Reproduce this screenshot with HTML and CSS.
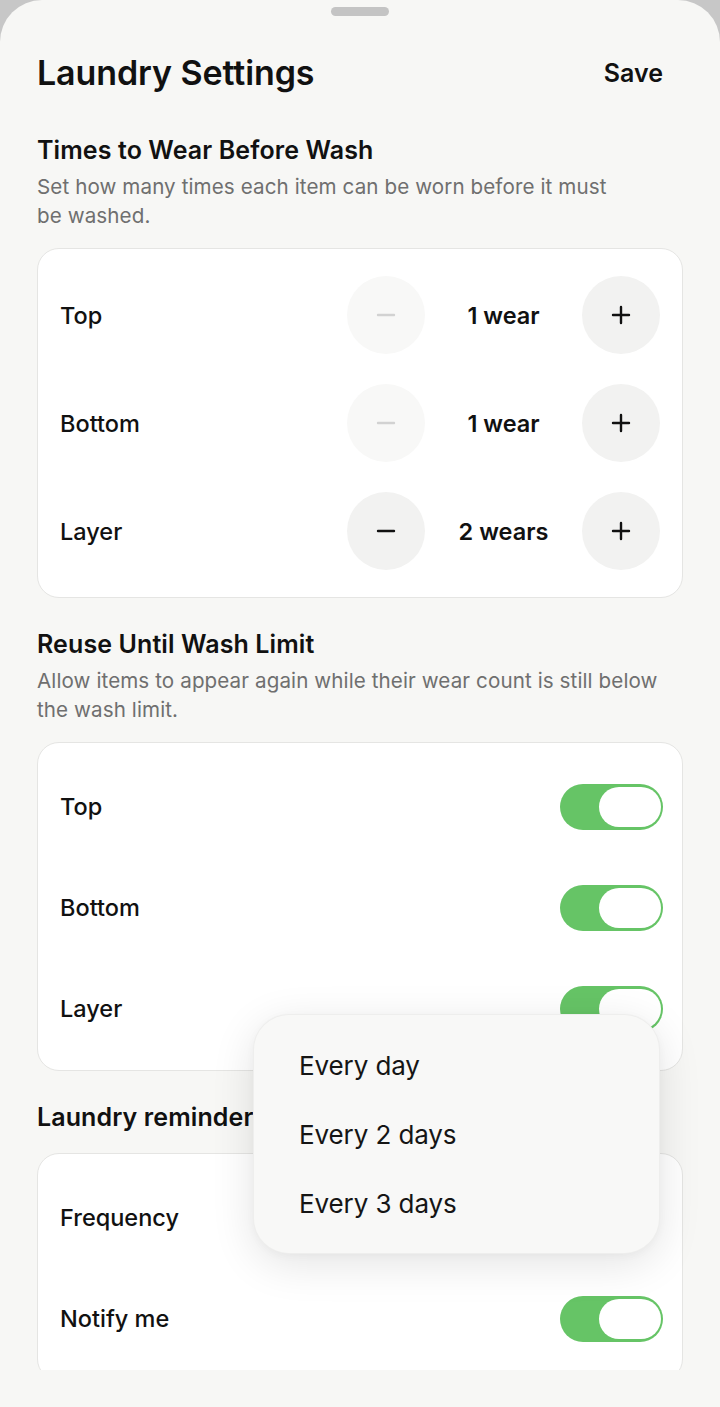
FILE: index.html
```html
<!DOCTYPE html>
<html lang="en">
<head>
<meta charset="utf-8">
<title>Laundry Settings</title>
<link rel="stylesheet" href="styles.css">
</head>
<body>
<div class="sheet">
  <div class="handle"></div>
  <header class="header">
    <h1 class="title">Laundry Settings</h1>
    <button class="save">Save</button>
  </header>
  <div class="scroll">
    <section class="section">
      <h2 class="sec-title">Times to Wear Before Wash</h2>
      <p class="sec-desc">Set how many times each item can be worn before it must<br>be washed.</p>
      <div class="card card-steppers">
        <div class="step-row">
          <span class="label">Top</span>
          <div class="stepper">
            <button class="circle disabled"><svg viewBox="0 0 20 20"><path d="M2 10h16"/></svg></button>
            <span class="value">1 wear</span>
            <button class="circle"><svg viewBox="0 0 20 20"><path d="M2 10h16M10 2v16"/></svg></button>
          </div>
        </div>
        <div class="step-row">
          <span class="label">Bottom</span>
          <div class="stepper">
            <button class="circle disabled"><svg viewBox="0 0 20 20"><path d="M2 10h16"/></svg></button>
            <span class="value">1 wear</span>
            <button class="circle"><svg viewBox="0 0 20 20"><path d="M2 10h16M10 2v16"/></svg></button>
          </div>
        </div>
        <div class="step-row">
          <span class="label">Layer</span>
          <div class="stepper">
            <button class="circle"><svg viewBox="0 0 20 20"><path d="M2 10h16"/></svg></button>
            <span class="value">2 wears</span>
            <button class="circle"><svg viewBox="0 0 20 20"><path d="M2 10h16M10 2v16"/></svg></button>
          </div>
        </div>
      </div>
    </section>

    <section class="section">
      <h2 class="sec-title">Reuse Until Wash Limit</h2>
      <p class="sec-desc">Allow items to appear again while their wear count is still below the wash limit.</p>
      <div class="card card-toggles">
        <div class="toggle-row"><span class="label">Top</span><span class="toggle"><span class="knob"></span></span></div>
        <div class="toggle-row"><span class="label">Bottom</span><span class="toggle"><span class="knob"></span></span></div>
        <div class="toggle-row"><span class="label">Layer</span><span class="toggle"><span class="knob"></span></span></div>
      </div>
    </section>

    <section class="section">
      <h2 class="sec-title sec-title-solo">Laundry reminders</h2>
      <div class="card card-toggles">
        <div class="toggle-row"><span class="label">Frequency</span></div>
        <div class="toggle-row"><span class="label">Notify me</span><span class="toggle"><span class="knob"></span></span></div>
      </div>
    </section>
  </div>

  <ul class="menu">
    <li class="menu-item">Every day</li>
    <li class="menu-item">Every 2 days</li>
    <li class="menu-item">Every 3 days</li>
  </ul>
</div>
</body>
</html>
```

FILE: styles.css
```css
* { box-sizing: border-box; }

html, body {
  margin: 0;
  padding: 0;
}

body {
  background: #c7c7c7;
  font-family: Inter, "Noto Sans", "Liberation Sans", sans-serif;
  color: #111111;
  width: 720px;
  height: 1407px;
  overflow: hidden;
}

.sheet {
  position: relative;
  width: 720px;
  height: 1407px;
  background: #f7f7f5;
  border-radius: 42px 42px 0 0;
  overflow: hidden;
}

.handle {
  width: 58px;
  height: 9px;
  border-radius: 5px;
  background: #c4c4c4;
  margin: 7px auto 0;
}

.header {
  display: flex;
  align-items: center;
  justify-content: space-between;
  padding: 37px 57px 0 37px;
  height: 40px;
  box-sizing: content-box;
}

.title {
  margin: 0;
  font-size: 34px;
  line-height: 40px;
  font-weight: 600;
  letter-spacing: -0.1px;
}

.save {
  border: 0;
  background: none;
  padding: 0;
  font-family: inherit;
  font-size: 25px;
  font-weight: 600;
  color: #111;
  letter-spacing: 0;
}

.scroll {
  height: 1277px;
  overflow: hidden;
  padding: 42px 37px 0;
}

.section {
  margin-bottom: 31px;
}

.sec-title {
  margin: 0;
  font-size: 25px;
  line-height: 30px;
  font-weight: 600;
  letter-spacing: 0.1px;
}

.sec-title-solo {
  margin-bottom: 21px;
}

.sec-desc {
  margin: 7px 0 18px;
  font-size: 20.6px;
  line-height: 29px;
  color: #6f6f6f;
  letter-spacing: 0.1px;
}

.card {
  background: #ffffff;
  border: 1px solid #e5e5e3;
  border-radius: 22px;
}

.card-steppers {
  padding: 27px 22px;
  display: flex;
  flex-direction: column;
  gap: 30px;
}

.step-row {
  display: flex;
  align-items: center;
  justify-content: space-between;
  height: 78px;
}

.label {
  font-size: 23.5px;
  font-weight: 500;
  letter-spacing: 0;
}

.stepper {
  display: flex;
  align-items: center;
}

.circle {
  width: 78px;
  height: 78px;
  border-radius: 50%;
  border: 0;
  padding: 0;
  background: #f2f2f1;
  display: flex;
  align-items: center;
  justify-content: center;
}

.circle svg {
  width: 20px;
  height: 20px;
  fill: none;
  stroke: #111;
  stroke-width: 2.4;
  stroke-linecap: round;
}

.circle.disabled {
  background: #f8f8f7;
}

.circle.disabled svg {
  stroke: #d2d2d2;
}

.value {
  width: 157px;
  text-align: center;
  font-size: 23.5px;
  font-weight: 600;
  letter-spacing: 0;
}

.card-toggles {
  padding: 13px 19px 11px 22px;
}

.toggle-row {
  display: flex;
  align-items: center;
  justify-content: space-between;
  height: 101px;
}

.toggle {
  width: 103px;
  height: 46px;
  border-radius: 23px;
  background: #66c466;
  padding: 3px 2px 3px 3px;
  display: flex;
  justify-content: flex-end;
}

.knob {
  width: 62px;
  height: 40px;
  border-radius: 20px;
  background: #ffffff;
}

.menu {
  position: absolute;
  left: 253px;
  top: 1014px;
  width: 407px;
  margin: 0;
  padding: 16px 0 15px;
  list-style: none;
  background: #f8f8f7;
  border: 1px solid rgba(0, 0, 0, 0.04);
  border-radius: 36px;
  box-shadow: 0 10px 44px rgba(0, 0, 0, 0.11), 0 2px 8px rgba(0, 0, 0, 0.03);
}

.menu-item {
  height: 69px;
  line-height: 69px;
  padding-left: 45px;
  font-size: 26px;
  font-weight: 400;
  letter-spacing: -0.1px;
  color: #151515;
}
```
